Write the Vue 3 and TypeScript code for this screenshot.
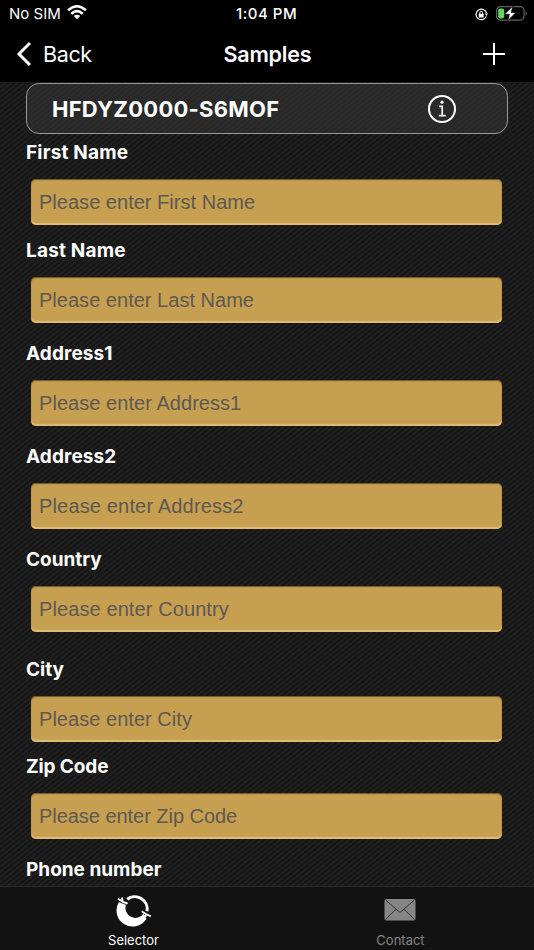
<script setup lang="ts">
interface Field { label: string; hint: string; gap: number; labelSpacing: number; hintSpacing: number }
const fields: Field[] = [
  { label: 'First Name', hint: 'Please enter First Name', gap: 12, labelSpacing: 0.2, hintSpacing: 0.02 },
  { label: 'Last Name', hint: 'Please enter Last Name', gap: 17, labelSpacing: 0.2, hintSpacing: 0.02 },
  { label: 'Address1', hint: 'Please enter Address1', gap: 17, labelSpacing: 0.1, hintSpacing: 0.05 },
  { label: 'Address2', hint: 'Please enter Address2', gap: 17, labelSpacing: 0.1, hintSpacing: 0.16 },
  { label: 'Country', hint: 'Please enter Country', gap: 24, labelSpacing: 0, hintSpacing: 0.1 },
  { label: 'City', hint: 'Please enter City', gap: 11, labelSpacing: 0, hintSpacing: 0.04 },
  { label: 'Zip Code', hint: 'Please enter Zip Code', gap: 17, labelSpacing: -0.1, hintSpacing: -0.04 },
  { label: 'Phone number', hint: 'Please enter Phone number', gap: 17, labelSpacing: 0, hintSpacing: 0.1 },
]
const visibleHints = fields.length - 1
</script>

<template>
  <div class="screen">
    <header>
      <div class="status">
        <span class="carrier">No SIM</span>
        <svg class="wifi" width="20" height="15" viewBox="0 0 20 15">
          <g fill="none" stroke="#fff" stroke-width="2.6">
            <path d="M1.1 5.3Q10-2.8 18.9 5.3" /><path d="M4.3 8.7Q10 3.5 15.7 8.7" />
          </g>
          <path fill="#fff" d="M6.8 11Q10 8.3 13.2 11L10 14.3Z" />
        </svg>
        <span class="time">1:04 PM</span>
        <svg class="lock" width="13" height="13" viewBox="0 0 13 13">
          <path d="M11.2 8.6A5.3 5.3 0 1 1 11.5 5" fill="none" stroke="#fff" stroke-width="1.2" />
          <path d="M9.8 5.5H13L11.5 8Z" fill="#fff" />
          <rect x="3.8" y="5.7" width="4.8" height="3.8" rx=".5" fill="#fff" />
          <path d="M4.8 6V4.8a1.4 1.4 0 0 1 2.8 0V6" fill="none" stroke="#fff" />
        </svg>
        <svg class="battery" width="32" height="17" viewBox="0 0 32 17">
          <rect x=".6" y="1.6" width="27.5" height="13.5" rx="4" fill="none" stroke="#626262" stroke-width="1.2" />
          <path d="M29.7 6q2 2.4 0 4.8Z" fill="#777" />
          <rect x="2.2" y="3.4" width="6" height="10" rx="2" fill="#62d464" />
          <path d="M16.9 1L8.5 9.2H13.4L11.8 15.7L20 7.4H15.2Z" fill="#fff" stroke="#000" stroke-width=".7" />
        </svg>
      </div>
      <nav class="nav">
        <svg class="chevron" width="17" height="26" viewBox="0 0 17 26"><path d="M16 2L5 13L16 24" fill="none" stroke="#fff" stroke-width="3" /></svg>
        <span class="back">Back</span>
        <h1>Samples</h1>
        <svg class="plus" width="24" height="24" viewBox="0 0 24 24"><path d="M12 1V23M1 12H23" stroke="#fff" stroke-width="2" /></svg>
      </nav>
    </header>
    <main>
      <svg class="texture" width="534" height="804">
        <defs>
          <pattern id="twill" width="6.3" height="5" patternUnits="userSpaceOnUse">
            <rect width="6.3" height="5" fill="#161616" />
            <path d="M-1.26 6L7.56-1M-1.26 1L1.26-1M5.04 6L7.56 4" stroke="#202020" stroke-width="1.8" />
          </pattern>
        </defs>
        <rect width="534" height="804" fill="url(#twill)" />
      </svg>
      <section class="part">
        <strong>HFDYZ0000-S6MOF</strong>
        <svg width="30" height="30" viewBox="0 0 30 30">
          <circle cx="15" cy="15" r="13" fill="none" stroke="#fff" stroke-width="2" />
          <circle cx="15" cy="8.2" r="1.6" fill="#fff" />
          <path d="M12 12.4H15.2V21.7M11.8 21.7H18.8" fill="none" stroke="#fff" stroke-width="1.7" />
        </svg>
      </section>
      <form>
        <div v-for="(f, i) in fields" :key="f.label" class="field" :style="{ marginBottom: f.gap + 'px' }">
          <label><span :style="{ letterSpacing: f.labelSpacing + 'px' }">{{ f.label }}</span></label>
          <div v-if="i < visibleHints" class="input"><span :style="{ letterSpacing: f.hintSpacing + 'px' }">{{ f.hint }}</span></div>
        </div>
      </form>
    </main>
    <footer>
      <div class="tab active">
        <svg width="36" height="34" viewBox="0 0 36 34">
          <path d="M11.2 6.3A12.4 12.4 0 0 1 31 18.3" fill="none" stroke="#fff" stroke-width="3" />
          <path d="M2.8 9.2A15.9 15.9 0 0 0 30.5 25.7L27.6 20.5A9.9 9.9 0 0 1 10 11.8Z" fill="#fff" />
          <path d="M2 5.8L6.7 8.8L11.6 10.5M6 4.5L6.7 9M25.7 18.3L30 21L34.7 23.3M30 21L29.3 24" fill="none" stroke="#fff" stroke-width="1.9" />
        </svg>
        <span>Selector</span>
      </div>
      <div class="tab">
        <svg width="36" height="34" viewBox="0 0 36 34">
          <rect x="1.5" y="6" width="31" height="21.5" rx="2" fill="#858585" />
          <path d="M2.5 7L17 19.5L31.5 7M2.5 26.5L13 16.3M31.5 26.5L21 16.3" fill="none" stroke="#333" />
        </svg>
        <span>Contact</span>
      </div>
    </footer>
  </div>
</template>

<style>
body { margin: 0; background: #000; }
</style>
<style scoped>
* { box-sizing: border-box; }
.screen { width: 534px; height: 950px; display: flex; flex-direction: column; overflow: hidden; color: #fff; font-family: Inter, "Liberation Sans", sans-serif; background: #000; }
header { height: 82px; flex: none; }
.status { height: 28px; display: grid; grid-template-columns: 67px 169px 1fr 21px 38px; align-items: center; font-size: 15px; line-height: 28px; white-space: nowrap; }
.carrier { padding-left: 9px; }
.wifi { margin-top: -3px; }
.time { font-weight: 500; letter-spacing: .5px; }
.lock { margin-top: 1px; }
.battery { margin-top: -2px; }
.nav { height: 52px; display: grid; grid-template-columns: 43px 180.5px 1fr 52px; align-items: center; }
.chevron { margin-left: 14px; }
.back { font-size: 21.5px; letter-spacing: -.35px; }
h1 { margin: 0; font-size: 21.5px; font-weight: 600; letter-spacing: -.2px; }
main { height: 804px; flex: none; position: relative; overflow: hidden; padding: 1px 26px 0; }
.texture { position: absolute; inset: 0; }
.part { position: relative; height: 51px; border: 1.5px solid #999; border-radius: 13px; background: rgba(53,53,53,.58); display: grid; grid-template-columns: 375px 1fr; padding: 0 25px; align-items: center; }
.part strong { font-size: 22px; letter-spacing: .25px; }
form { position: relative; padding-top: 5px; }
.field { height: 86px; }
label { display: block; height: 26px; line-height: 28px; font-size: 19px; font-weight: 700; white-space: nowrap; }
.input { height: 46px; margin: 14px 6px 0 5px; padding-left: 8px; line-height: 47px; font-family: "Liberation Sans", sans-serif; font-size: 20px; color: #5d5953; background: #c79f50; border-radius: 5px; box-shadow: inset 0 1px 1px #6d5429, inset 0 -2px 1px #dfbd78; white-space: nowrap; }
footer { height: 64px; flex: none; display: grid; grid-template-columns: 1fr 1fr; background: #121212; border-top: 1px solid #292929; }
.tab { display: flex; flex-direction: column; align-items: center; color: #858585; font-size: 13px; line-height: 18px; padding-top: 6px; gap: 4px; }
.active { color: #fff; }
</style>
